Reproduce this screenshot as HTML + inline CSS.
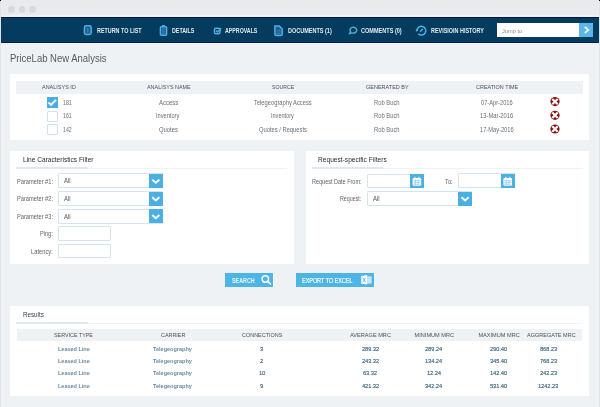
<!DOCTYPE html>
<html><head><meta charset="utf-8">
<style>
*{box-sizing:border-box;margin:0;padding:0}
html,body{width:600px;height:407px;overflow:hidden;background:#eef2f5;font-family:"Liberation Sans",sans-serif}
.a{position:absolute}
.t{position:absolute;white-space:nowrap;transform-origin:0 0}
.panel{position:absolute;background:#fff}
.hb{position:absolute;background:#eef2f5}
.box{position:absolute;background:#fff;border:1px solid #d3e5f4;border-radius:1px}
.blue{position:absolute;background:#4ab0e4}
svg{position:absolute;overflow:visible}

</style></head><body>
<div id="wrap" style="position:absolute;left:0;top:0;width:600px;height:407px;filter:blur(0.3px)">
<div class="a" style="left:0;top:0;width:600px;height:17px;background:#e8eaec"></div>
<div class="a" style="left:0;top:15px;width:600px;height:2px;background:#eff1f3"></div>
<div class="a" style="left:8.3px;top:5.8px;width:6.8px;height:6.8px;border-radius:50%;background:#d6dadd"></div>
<div class="a" style="left:18.7px;top:5.8px;width:6.8px;height:6.8px;border-radius:50%;background:#d6dadd"></div>
<div class="a" style="left:29.3px;top:5.8px;width:6.8px;height:6.8px;border-radius:50%;background:#d6dadd"></div>
<div class="a" style="left:0;top:0;width:1px;height:407px;background:#e0e3e6"></div>
<div class="a" style="left:599px;top:0;width:1px;height:407px;background:#e0e3e6"></div>
<div class="a" style="left:0;top:0;width:1px;height:1px;background:#000"></div>
<div class="a" style="left:599px;top:0;width:1px;height:1px;background:#000"></div>
<div class="a" style="left:1px;top:17px;width:598px;height:26px;background:#033c5e;border-top:1px solid #02164e;border-bottom:1px solid #031f52"></div>

<!-- nav icons -->
<svg style="left:0;top:0" width="600" height="50">
 <g fill="none" stroke="#4eaee3" stroke-width="1.5">
  <rect x="84.4" y="25.8" width="6.8" height="8.6" rx="1.6" fill="#1d5f8c"/>
  <line x1="87.8" y1="27.8" x2="87.8" y2="32.6" stroke="#3f8fc0" stroke-width="1"/>
  <rect x="160.4" y="26.8" width="6.2" height="8.4" rx="1" fill="#1d5f8c"/>
  <path d="M161.9 26.8 l0.8 -1.1 h1.6 l0.8 1.1" stroke-width="1.3"/>
  <line x1="162.2" y1="29.2" x2="164.8" y2="29.2" stroke="#3f8fc0" stroke-width="0.8"/>
  <line x1="162.2" y1="31.1" x2="164.8" y2="31.1" stroke="#3f8fc0" stroke-width="0.8"/>
  <line x1="162.2" y1="33" x2="164.8" y2="33" stroke="#3f8fc0" stroke-width="0.8"/>
  <rect x="214.4" y="28.3" width="5.6" height="5.4" rx="1.5"/>
  <path d="M215.8 30.5 l1.6 1.6 l3.7 -3.9" stroke-width="1.4"/>
  <path d="M274.9 26.1 h4.4 l2.9 2.9 v5.2 a1.2 1.2 0 0 1 -1.2 1.2 h-4.9 a1.2 1.2 0 0 1 -1.2 -1.2 z" fill="#1d5f8c"/>
  <line x1="276.5" y1="33.4" x2="280.4" y2="33.4" stroke="#3f8fc0" stroke-width="0.9"/>
  <line x1="277" y1="30.8" x2="280.4" y2="30.8" stroke="#3f8fc0" stroke-width="0.9"/>
  <path d="M349.7 33.4 l0.9 -1.5 a3.4 2.9 0 1 1 1.6 1.0 z" stroke-width="1.4"/>
  <path d="M417 30.6 a4.4 4.4 0 1 1 1.4 3.3" stroke-width="1.5"/>
  <circle cx="416.8" cy="30.4" r="1.1" fill="#4eaee3" stroke="none"/>
  <path d="M420.1 31.7 l2.7 -2.7" stroke-width="1.5"/>
 </g>
</svg>
<div class="a" style="left:497px;top:23px;width:83px;height:14px;background:#fff"></div>
<div class="blue" style="left:579.4px;top:23px;width:14px;height:14px;background:#5ab7e7"></div>
<svg style="left:0;top:0" width="600" height="50"><path d="M584.9 26.9 l3.3 3 l-3.3 3" fill="none" stroke="#fff" stroke-width="1.9"/></svg>

<!-- panel 1 -->
<div class="panel" style="left:10px;top:74px;width:579px;height:66px"></div>
<div class="hb" style="left:16px;top:81px;width:567px;height:12.5px"></div>
<div class="a" style="left:47px;top:97px;width:11px;height:11px;background:#4aaee2"></div>
<svg style="left:0;top:0" width="600" height="150"><path d="M48.5 102.4 l2.5 2.6 l5 -5.2" fill="none" stroke="#fff" stroke-width="1.9"/></svg>
<div class="box" style="left:47px;top:110.6px;width:11px;height:11px;border-color:#cfe2f3"></div>
<div class="box" style="left:47px;top:124.2px;width:11px;height:11px;border-color:#cfe2f3"></div>
<svg style="left:0;top:0" width="600" height="150">
 <g>
  <circle cx="555" cy="101.6" r="4.6" fill="#8c1010"/>
  <circle cx="555" cy="115.3" r="4.6" fill="#8c1010"/>
  <circle cx="555" cy="129" r="4.6" fill="#8c1010"/>
 </g>
 <g stroke="#fff" stroke-width="2.1" stroke-linecap="butt">
  <path d="M552.3 98.9 l5.4 5.4 M557.7 98.9 l-5.4 5.4"/>
  <path d="M552.3 112.6 l5.4 5.4 M557.7 112.6 l-5.4 5.4"/>
  <path d="M552.3 126.3 l5.4 5.4 M557.7 126.3 l-5.4 5.4"/>
 </g>
</svg>

<!-- filter panels -->
<div class="panel" style="left:10px;top:151px;width:283.6px;height:113px"></div>
<div class="panel" style="left:305.8px;top:151px;width:283.2px;height:113px"></div>
<div class="a" style="left:16.2px;top:167.5px;width:271.3px;height:1px;background:#f0f3f6"></div>
<div class="a" style="left:16.2px;top:167.3px;width:71.6px;height:1.5px;background:#e0e8ee"></div>
<div class="a" style="left:312px;top:167.5px;width:271px;height:1px;background:#f0f3f6"></div>
<div class="a" style="left:312px;top:167.3px;width:71.2px;height:1.5px;background:#e0e8ee"></div>

<div class="box" style="left:57.9px;top:173.3px;width:105px;height:14.8px"></div>
<div class="box" style="left:57.9px;top:191.1px;width:105px;height:14.8px"></div>
<div class="box" style="left:57.9px;top:208.9px;width:105px;height:14.8px"></div>
<div class="box" style="left:57.9px;top:226.3px;width:53px;height:14.5px"></div>
<div class="box" style="left:57.9px;top:243.6px;width:53px;height:14.8px"></div>
<div class="blue" style="left:149px;top:173.8px;width:13.8px;height:14.2px"></div>
<div class="blue" style="left:149px;top:191.5px;width:13.8px;height:14.2px"></div>
<div class="blue" style="left:149px;top:209.2px;width:13.8px;height:14.2px"></div>

<div class="box" style="left:367.3px;top:173.5px;width:57px;height:14.6px"></div>
<div class="blue" style="left:410px;top:173.8px;width:14px;height:14.2px"></div>
<div class="box" style="left:457.7px;top:173.4px;width:57px;height:14.6px"></div>
<div class="blue" style="left:500.8px;top:173.8px;width:13.9px;height:14.2px"></div>
<div class="box" style="left:367.3px;top:191.3px;width:104.7px;height:14.4px"></div>
<div class="blue" style="left:458.3px;top:191.5px;width:13.7px;height:14.2px"></div>

<svg style="left:0;top:0" width="600" height="300">
 <g fill="none" stroke="#fff" stroke-width="1.9">
  <path d="M152.2 179.6 l3.6 3.2 l3.6 -3.2"/>
  <path d="M152.2 197.3 l3.6 3.2 l3.6 -3.2"/>
  <path d="M152.2 215 l3.6 3.2 l3.6 -3.2"/>
  <path d="M461.5 197.3 l3.6 3.2 l3.6 -3.2"/>
 </g>
 <g>
  <rect x="412.6" y="178" width="8.6" height="7.8" rx="1.3" fill="#fff"/>
  <rect x="414.3" y="176.8" width="1.1" height="2" fill="#fff"/>
  <rect x="418.4" y="176.8" width="1.1" height="2" fill="#fff"/>
  <g stroke="#7cc4ec" stroke-width="0.6">
   <line x1="413.4" y1="180.6" x2="420.4" y2="180.6"/>
   <line x1="413.4" y1="182.4" x2="420.4" y2="182.4"/>
   <line x1="413.4" y1="184.2" x2="420.4" y2="184.2"/>
   <line x1="415.5" y1="179.6" x2="415.5" y2="185.2"/>
   <line x1="418.3" y1="179.6" x2="418.3" y2="185.2"/>
  </g>
 </g>
 <g transform="translate(90.8 0)">
  <rect x="412.6" y="178" width="8.6" height="7.8" rx="1.3" fill="#fff"/>
  <rect x="414.3" y="176.8" width="1.1" height="2" fill="#fff"/>
  <rect x="418.4" y="176.8" width="1.1" height="2" fill="#fff"/>
  <g stroke="#7cc4ec" stroke-width="0.6">
   <line x1="413.4" y1="180.6" x2="420.4" y2="180.6"/>
   <line x1="413.4" y1="182.4" x2="420.4" y2="182.4"/>
   <line x1="413.4" y1="184.2" x2="420.4" y2="184.2"/>
   <line x1="415.5" y1="179.6" x2="415.5" y2="185.2"/>
   <line x1="418.3" y1="179.6" x2="418.3" y2="185.2"/>
  </g>
 </g>
 
</svg>

<!-- buttons -->
<div class="a" style="left:224.5px;top:272.6px;width:49.2px;height:14.8px;background:#f7f9fb"></div>
<div class="blue" style="left:225.1px;top:273.4px;width:47.9px;height:13.4px;background:#4db4e6"></div>
<div class="a" style="left:295.5px;top:272.6px;width:78.8px;height:14.8px;background:#f7f9fb"></div>
<div class="blue" style="left:296px;top:273.3px;width:77.8px;height:13.5px;background:#4db4e6"></div>
<svg style="left:0;top:0" width="600" height="300">
 <circle cx="265.3" cy="279" r="3.2" fill="none" stroke="#fff" stroke-width="1.4"/>
 <path d="M267.6 281.3 l3 2.9" stroke="#fff" stroke-width="1.6" stroke-linecap="round"/>
 <path d="M367.2 276.3 h4.4 v7.3 h-4.4 z" fill="#c9e6f7"/>
 <path d="M361.2 276 l6 -0.9 v9.5 l-6 -0.9 z" fill="#fff"/>
 <path d="M362.8 277.8 l2.8 4.4 M365.6 277.8 l-2.8 4.4" stroke="#4db4e6" stroke-width="0.9"/>
</svg>

<!-- results -->
<div class="panel" style="left:10px;top:306.4px;width:579px;height:89.6px"></div>
<div class="a" style="left:16.4px;top:322.6px;width:566.6px;height:1px;background:#f0f3f6"></div>
<div class="a" style="left:16.4px;top:322.4px;width:71.2px;height:1.5px;background:#e0e8ee"></div>
<div class="hb" style="left:17px;top:329px;width:565px;height:12.4px"></div>

<div class="t" style="left:97.00px;top:28.28px;font-size:6.4px;line-height:6.4px;font-weight:bold;color:#e2e8ee;transform:scaleX(0.845);">RETURN TO LIST</div>
<div class="t" style="left:172.00px;top:28.28px;font-size:6.4px;line-height:6.4px;font-weight:bold;color:#e2e8ee;transform:scaleX(0.833);">DETAILS</div>
<div class="t" style="left:225.00px;top:28.28px;font-size:6.4px;line-height:6.4px;font-weight:bold;color:#e2e8ee;transform:scaleX(0.824);">APPROVALS</div>
<div class="t" style="left:288.00px;top:28.28px;font-size:6.4px;line-height:6.4px;font-weight:bold;color:#e2e8ee;transform:scaleX(0.861);">DOCUMENTS (1)</div>
<div class="t" style="left:361.00px;top:28.28px;font-size:6.4px;line-height:6.4px;font-weight:bold;color:#e2e8ee;transform:scaleX(0.869);">COMMENTS (0)</div>
<div class="t" style="left:430.80px;top:28.28px;font-size:6.4px;line-height:6.4px;font-weight:bold;color:#e2e8ee;transform:scaleX(0.852);">REVISIOIN HISTORY</div>
<div class="t" style="left:502.30px;top:28.45px;font-size:6.2px;line-height:6.2px;font-weight:normal;color:#8c9196;transform:scaleX(0.917);">Jump to</div>
<div class="t" style="left:10.00px;top:53.83px;font-size:10.0px;line-height:10.0px;font-weight:normal;color:#565b61;transform:scaleX(0.949);">PriceLab New Analysis</div>
<div class="t" style="left:42.20px;top:85.26px;font-size:5.6px;line-height:5.6px;font-weight:normal;color:#4c5156;transform:scaleX(0.981);">ANALISYS ID</div>
<div class="t" style="left:146.70px;top:85.26px;font-size:5.6px;line-height:5.6px;font-weight:normal;color:#4c5156;transform:scaleX(0.970);">ANALISYS NAME</div>
<div class="t" style="left:271.70px;top:85.26px;font-size:5.6px;line-height:5.6px;font-weight:normal;color:#4c5156;transform:scaleX(0.934);">SOURCE</div>
<div class="t" style="left:366.00px;top:85.26px;font-size:5.6px;line-height:5.6px;font-weight:normal;color:#4c5156;transform:scaleX(0.984);">GENERATED BY</div>
<div class="t" style="left:475.70px;top:85.26px;font-size:5.6px;line-height:5.6px;font-weight:normal;color:#4c5156;transform:scaleX(0.975);">CREATION TIME</div>
<div class="t" style="left:62.70px;top:100.28px;font-size:6.4px;line-height:6.4px;font-weight:normal;color:#6a6f74;transform:scaleX(0.819);">181</div>
<div class="t" style="left:159.00px;top:100.28px;font-size:6.4px;line-height:6.4px;font-weight:normal;color:#6a6f74;transform:scaleX(0.931);">Access</div>
<div class="t" style="left:254.20px;top:100.28px;font-size:6.4px;line-height:6.4px;font-weight:normal;color:#6a6f74;transform:scaleX(0.902);">Telegeography Access</div>
<div class="t" style="left:374.20px;top:100.28px;font-size:6.4px;line-height:6.4px;font-weight:normal;color:#6a6f74;transform:scaleX(0.912);">Rob Buch</div>
<div class="t" style="left:481.00px;top:100.28px;font-size:6.4px;line-height:6.4px;font-weight:normal;color:#6a6f74;transform:scaleX(0.890);">07-Apr-2016</div>
<div class="t" style="left:62.70px;top:112.98px;font-size:6.4px;line-height:6.4px;font-weight:normal;color:#6a6f74;transform:scaleX(0.819);">161</div>
<div class="t" style="left:156.00px;top:112.98px;font-size:6.4px;line-height:6.4px;font-weight:normal;color:#6a6f74;transform:scaleX(0.886);">Inventory</div>
<div class="t" style="left:271.20px;top:112.98px;font-size:6.4px;line-height:6.4px;font-weight:normal;color:#6a6f74;transform:scaleX(0.867);">Inventory</div>
<div class="t" style="left:374.20px;top:112.98px;font-size:6.4px;line-height:6.4px;font-weight:normal;color:#6a6f74;transform:scaleX(0.912);">Rob Buch</div>
<div class="t" style="left:479.80px;top:112.98px;font-size:6.4px;line-height:6.4px;font-weight:normal;color:#6a6f74;transform:scaleX(0.910);">13-Mar-2016</div>
<div class="t" style="left:62.70px;top:126.58px;font-size:6.4px;line-height:6.4px;font-weight:normal;color:#6a6f74;transform:scaleX(0.819);">142</div>
<div class="t" style="left:159.00px;top:126.58px;font-size:6.4px;line-height:6.4px;font-weight:normal;color:#6a6f74;transform:scaleX(0.921);">Quotes</div>
<div class="t" style="left:259.00px;top:126.58px;font-size:6.4px;line-height:6.4px;font-weight:normal;color:#6a6f74;transform:scaleX(0.905);">Quotes / Requests</div>
<div class="t" style="left:374.20px;top:126.58px;font-size:6.4px;line-height:6.4px;font-weight:normal;color:#6a6f74;transform:scaleX(0.912);">Rob Buch</div>
<div class="t" style="left:480.40px;top:126.58px;font-size:6.4px;line-height:6.4px;font-weight:normal;color:#6a6f74;transform:scaleX(0.892);">17-May-2016</div>
<div class="t" style="left:22.50px;top:155.82px;font-size:7.3px;line-height:7.3px;font-weight:normal;color:#2a2e33;transform:scaleX(0.901);">Line Caracteristics Filter</div>
<div class="t" style="left:318.00px;top:155.82px;font-size:7.3px;line-height:7.3px;font-weight:normal;color:#2a2e33;transform:scaleX(0.906);">Request-specific Filters</div>
<div class="t" style="left:16.80px;top:179.18px;font-size:6.4px;line-height:6.4px;font-weight:normal;color:#60656a;transform:scaleX(0.889);">Parameter #1:</div>
<div class="t" style="left:16.80px;top:195.78px;font-size:6.4px;line-height:6.4px;font-weight:normal;color:#60656a;transform:scaleX(0.889);">Parameter #2:</div>
<div class="t" style="left:16.80px;top:214.38px;font-size:6.4px;line-height:6.4px;font-weight:normal;color:#60656a;transform:scaleX(0.889);">Parameter #3:</div>
<div class="t" style="left:40.00px;top:230.88px;font-size:6.4px;line-height:6.4px;font-weight:normal;color:#60656a;transform:scaleX(0.879);">Ping:</div>
<div class="t" style="left:31.00px;top:249.28px;font-size:6.4px;line-height:6.4px;font-weight:normal;color:#60656a;transform:scaleX(0.902);">Latency:</div>
<div class="t" style="left:63.75px;top:177.88px;font-size:6.4px;line-height:6.4px;font-weight:normal;color:#55595e;transform:scaleX(0.935);">All</div>
<div class="t" style="left:63.75px;top:195.58px;font-size:6.4px;line-height:6.4px;font-weight:normal;color:#55595e;transform:scaleX(0.935);">All</div>
<div class="t" style="left:63.75px;top:214.18px;font-size:6.4px;line-height:6.4px;font-weight:normal;color:#55595e;transform:scaleX(0.935);">All</div>
<div class="t" style="left:311.80px;top:179.08px;font-size:6.4px;line-height:6.4px;font-weight:normal;color:#60656a;transform:scaleX(0.860);">Request Date From:</div>
<div class="t" style="left:445.30px;top:179.38px;font-size:6.4px;line-height:6.4px;font-weight:normal;color:#60656a;transform:scaleX(0.903);">To:</div>
<div class="t" style="left:340.00px;top:195.58px;font-size:6.4px;line-height:6.4px;font-weight:normal;color:#60656a;transform:scaleX(0.833);">Request:</div>
<div class="t" style="left:373.00px;top:195.58px;font-size:6.4px;line-height:6.4px;font-weight:normal;color:#55595e;transform:scaleX(0.943);">All</div>
<div class="t" style="left:232.00px;top:278.47px;font-size:6.3px;line-height:6.3px;font-weight:bold;color:#e8f4fb;transform:scaleX(0.851);">SEARCH</div>
<div class="t" style="left:302.00px;top:278.47px;font-size:6.3px;line-height:6.3px;font-weight:normal;color:#e8f4fb;transform:scaleX(0.864);text-shadow:0.2px 0 0 #e8f4fb;">EXPORT TO EXCEL</div>
<div class="t" style="left:23.00px;top:311.64px;font-size:6.8px;line-height:6.8px;font-weight:normal;color:#3a3f44;transform:scaleX(0.920);">Results</div>
<div class="t" style="left:54.20px;top:333.36px;font-size:5.6px;line-height:5.6px;font-weight:normal;color:#4c5156;transform:scaleX(0.961);">SERVICE TYPE</div>
<div class="t" style="left:160.70px;top:333.36px;font-size:5.6px;line-height:5.6px;font-weight:normal;color:#4c5156;transform:scaleX(0.967);">CARRIER</div>
<div class="t" style="left:241.70px;top:333.36px;font-size:5.6px;line-height:5.6px;font-weight:normal;color:#4c5156;transform:scaleX(0.976);">CONNECTIONS</div>
<div class="t" style="left:350.00px;top:333.36px;font-size:5.6px;line-height:5.6px;font-weight:normal;color:#4c5156;">AVERAGE MRC</div>
<div class="t" style="left:414.60px;top:333.36px;font-size:5.6px;line-height:5.6px;font-weight:normal;color:#4c5156;">MINIMUM MRC</div>
<div class="t" style="left:478.40px;top:333.36px;font-size:5.6px;line-height:5.6px;font-weight:normal;color:#4c5156;">MAXIMUM MRC</div>
<div class="t" style="left:527.00px;top:333.36px;font-size:5.6px;line-height:5.6px;font-weight:normal;color:#4c5156;transform:scaleX(0.986);">AGGREGATE MRC</div>
<div class="t" style="left:58.00px;top:345.72px;font-size:6.0px;line-height:6.0px;font-weight:bold;color:#6a8aa0;transform:scaleX(0.914);">Leased Line</div>
<div class="t" style="left:153.00px;top:345.72px;font-size:6.0px;line-height:6.0px;font-weight:bold;color:#6a8aa0;transform:scaleX(0.921);">Telegeography</div>
<div class="t" style="left:260.44px;top:345.72px;font-size:6.0px;line-height:6.0px;font-weight:normal;color:#577990;transform:scaleX(0.930);text-shadow:0.15px 0 0 #577990;">3</div>
<div class="t" style="left:361.86px;top:345.72px;font-size:6.0px;line-height:6.0px;font-weight:normal;color:#577990;transform:scaleX(0.930);text-shadow:0.15px 0 0 #577990;">289.32</div>
<div class="t" style="left:424.96px;top:345.72px;font-size:6.0px;line-height:6.0px;font-weight:normal;color:#577990;transform:scaleX(0.930);text-shadow:0.15px 0 0 #577990;">289.24</div>
<div class="t" style="left:490.46px;top:345.72px;font-size:6.0px;line-height:6.0px;font-weight:normal;color:#577990;transform:scaleX(0.930);text-shadow:0.15px 0 0 #577990;">290.40</div>
<div class="t" style="left:539.66px;top:345.72px;font-size:6.0px;line-height:6.0px;font-weight:normal;color:#577990;transform:scaleX(0.930);text-shadow:0.15px 0 0 #577990;">868.23</div>
<div class="t" style="left:58.00px;top:358.12px;font-size:6.0px;line-height:6.0px;font-weight:bold;color:#6a8aa0;transform:scaleX(0.914);">Leased Line</div>
<div class="t" style="left:153.00px;top:358.12px;font-size:6.0px;line-height:6.0px;font-weight:bold;color:#6a8aa0;transform:scaleX(0.921);">Telegeography</div>
<div class="t" style="left:260.44px;top:358.12px;font-size:6.0px;line-height:6.0px;font-weight:normal;color:#577990;transform:scaleX(0.930);text-shadow:0.15px 0 0 #577990;">2</div>
<div class="t" style="left:361.86px;top:358.12px;font-size:6.0px;line-height:6.0px;font-weight:normal;color:#577990;transform:scaleX(0.930);text-shadow:0.15px 0 0 #577990;">243.32</div>
<div class="t" style="left:424.96px;top:358.12px;font-size:6.0px;line-height:6.0px;font-weight:normal;color:#577990;transform:scaleX(0.930);text-shadow:0.15px 0 0 #577990;">134.24</div>
<div class="t" style="left:490.46px;top:358.12px;font-size:6.0px;line-height:6.0px;font-weight:normal;color:#577990;transform:scaleX(0.930);text-shadow:0.15px 0 0 #577990;">345.40</div>
<div class="t" style="left:539.66px;top:358.12px;font-size:6.0px;line-height:6.0px;font-weight:normal;color:#577990;transform:scaleX(0.930);text-shadow:0.15px 0 0 #577990;">768.23</div>
<div class="t" style="left:58.00px;top:370.22px;font-size:6.0px;line-height:6.0px;font-weight:bold;color:#6a8aa0;transform:scaleX(0.914);">Leased Line</div>
<div class="t" style="left:153.00px;top:370.22px;font-size:6.0px;line-height:6.0px;font-weight:bold;color:#6a8aa0;transform:scaleX(0.921);">Telegeography</div>
<div class="t" style="left:258.89px;top:370.22px;font-size:6.0px;line-height:6.0px;font-weight:normal;color:#577990;transform:scaleX(0.930);text-shadow:0.15px 0 0 #577990;">10</div>
<div class="t" style="left:363.41px;top:370.22px;font-size:6.0px;line-height:6.0px;font-weight:normal;color:#577990;transform:scaleX(0.930);text-shadow:0.15px 0 0 #577990;">63.32</div>
<div class="t" style="left:426.51px;top:370.22px;font-size:6.0px;line-height:6.0px;font-weight:normal;color:#577990;transform:scaleX(0.930);text-shadow:0.15px 0 0 #577990;">12.24</div>
<div class="t" style="left:490.46px;top:370.22px;font-size:6.0px;line-height:6.0px;font-weight:normal;color:#577990;transform:scaleX(0.930);text-shadow:0.15px 0 0 #577990;">142.40</div>
<div class="t" style="left:539.66px;top:370.22px;font-size:6.0px;line-height:6.0px;font-weight:normal;color:#577990;transform:scaleX(0.930);text-shadow:0.15px 0 0 #577990;">242.23</div>
<div class="t" style="left:58.00px;top:382.72px;font-size:6.0px;line-height:6.0px;font-weight:bold;color:#6a8aa0;transform:scaleX(0.914);">Leased Line</div>
<div class="t" style="left:153.00px;top:382.72px;font-size:6.0px;line-height:6.0px;font-weight:bold;color:#6a8aa0;transform:scaleX(0.921);">Telegeography</div>
<div class="t" style="left:260.44px;top:382.72px;font-size:6.0px;line-height:6.0px;font-weight:normal;color:#577990;transform:scaleX(0.930);text-shadow:0.15px 0 0 #577990;">9</div>
<div class="t" style="left:361.86px;top:382.72px;font-size:6.0px;line-height:6.0px;font-weight:normal;color:#577990;transform:scaleX(0.930);text-shadow:0.15px 0 0 #577990;">421.32</div>
<div class="t" style="left:424.96px;top:382.72px;font-size:6.0px;line-height:6.0px;font-weight:normal;color:#577990;transform:scaleX(0.930);text-shadow:0.15px 0 0 #577990;">342.24</div>
<div class="t" style="left:490.46px;top:382.72px;font-size:6.0px;line-height:6.0px;font-weight:normal;color:#577990;transform:scaleX(0.930);text-shadow:0.15px 0 0 #577990;">531.40</div>
<div class="t" style="left:538.11px;top:382.72px;font-size:6.0px;line-height:6.0px;font-weight:normal;color:#577990;transform:scaleX(0.930);text-shadow:0.15px 0 0 #577990;">1242.23</div>
</div>
</body></html>
